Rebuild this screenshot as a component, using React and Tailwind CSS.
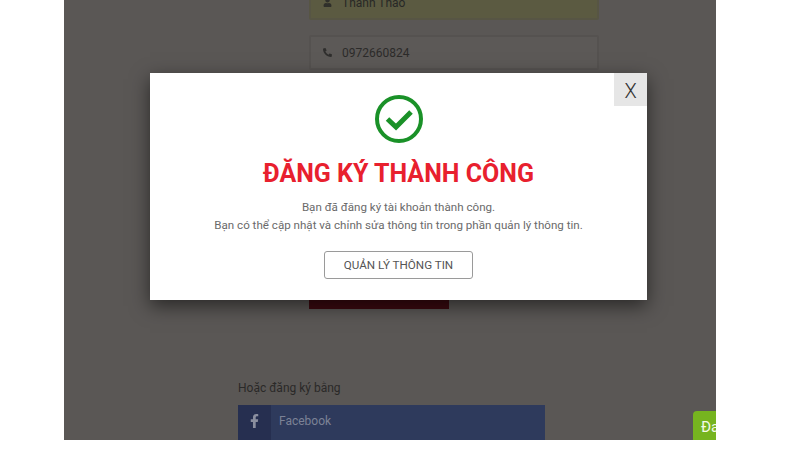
import React from "react";
import { FaUser, FaPhoneAlt, FaFacebookF } from "react-icons/fa";

export default function App() {
  return (
    <div className="relative w-[800px] h-[450px] overflow-hidden bg-white font-['Roboto',sans-serif]">
      <div className="relative ml-[64px] w-[652px] h-[440px] overflow-hidden bg-[#5a5755]">
        <div className="ml-[245px] w-[290px] flex flex-col">
          <div className="mt-[-15px] h-[35px] flex items-center pl-3 gap-[10px] bg-[#5b5a41] border-2 border-[#575544] rounded-[2px] text-[12px] text-[#282826]">
            <FaUser className="w-[9px] h-[9px] text-[#2f2f2a]" />
            <span>Thanh Thảo</span>
          </div>
          <div className="mt-[15px] h-[35px] flex items-center pl-3 gap-[10px] bg-[#5c5957] border-2 border-[#555250] rounded-[2px] text-[12px] text-[#2c2b2a]">
            <FaPhoneAlt className="w-[9px] h-[9px] text-[#2f2e2d]" />
            <span>0972660824</span>
          </div>
          <div className="mt-[205px] w-[140px] h-[34px] bg-[#3c0a10]" />
        </div>
        <div className="ml-[174px] mt-[71px] w-[307px]">
          <div className="text-[12px] leading-[16px] text-[#2a2928]">Hoặc đăng ký bằng</div>
          <div className="mt-[9px] h-[38px] flex items-start bg-[#2e3a5c]">
            <div className="w-[33px] h-full flex justify-center pt-[9px] bg-[#262f50]">
              <FaFacebookF className="w-[11px] h-[14px] text-[#8b8f9f]" />
            </div>
            <span className="ml-[8px] mt-[8px] text-[12px] leading-[16px] text-[#7c8296]">Facebook</span>
          </div>
        </div>
        <div className="absolute left-[629px] top-[411px] w-[30px] h-[36px] pl-[8px] pt-[6px] rounded-tl-[4px] bg-[#76b41f] text-[15px] leading-[20px] text-[#f4f9e8]">
          Đa
        </div>
      </div>

      <div className="absolute left-[150px] top-[73px] w-[497px] h-[227px] bg-white shadow-[0_6px_18px_rgba(0,0,0,0.55)] flex flex-col items-center">
        <button className="absolute right-0 top-0 w-[33px] h-[33px] pt-[2px] flex items-center justify-center bg-[#e6e6e6] text-[20px] font-light text-[#333333]">
          X
        </button>
        <svg className="mt-[22px] w-[48px] h-[48px]" viewBox="0 0 48 48" fill="none">
          <circle cx="24" cy="24" r="22" stroke="#1a9128" strokeWidth="4" />
          <path d="M12.5 24 L21 32 L36 17" stroke="#1a9128" strokeWidth="5" strokeLinejoin="miter" />
        </svg>
        <h1 className="mt-[13px] text-[25px] leading-[36px] font-bold text-[#e8202e]">ĐĂNG KÝ THÀNH CÔNG</h1>
        <p className="mt-[6px] text-[11.6px] leading-[18px] text-[#6a6a6a] text-center">
          Bạn đã đăng ký tài khoản thành công.
          <br />
          Bạn có thể cập nhật và chỉnh sửa thông tin trong phần quản lý thông tin.
        </p>
        <button className="mt-[17px] w-[149px] h-[28px] pt-[1px] border border-[#9a9a9a] rounded-[3px] bg-white text-[11.65px] text-[#555555]">
          QUẢN LÝ THÔNG TIN
        </button>
      </div>
    </div>
  );
}
